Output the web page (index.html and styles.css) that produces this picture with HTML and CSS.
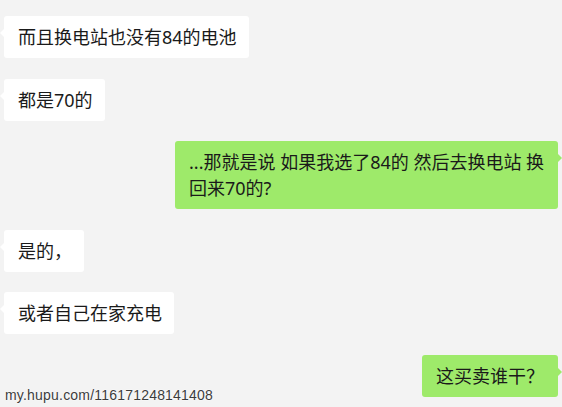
FILE: index.html
```html
<!DOCTYPE html>
<html lang="zh-CN">
<head>
  <meta charset="UTF-8" />
  <meta name="viewport" content="width=device-width, initial-scale=1" />
  <title>聊天记录</title>
  <link rel="stylesheet" href="styles.css">
</head>
<body>

  <div class="chat">
    <div class="msg left"><div class="bubble">而且换电站也没有84的电池</div></div>
    <div class="msg left"><div class="bubble">都是70的</div></div>
    <div class="msg right"><div class="bubble wide">...那就是说 如果我选了84的 然后去换电站 换回来70的?</div></div>
    <div class="msg left"><div class="bubble">是的，</div></div>
    <div class="msg left"><div class="bubble">或者自己在家充电</div></div>
    <div class="msg right"><div class="bubble">这买卖谁干？</div></div>
  </div>

  <div class="watermark">my.hupu.com/116171248141408</div>

</body>
</html>
```

FILE: styles.css
```css
* {
  margin: 0;
  padding: 0;
  box-sizing: border-box;
}
body {
  background-color: #f3f3f3;
  color: #1a1a1a;
  font-family: "Noto Sans", "Noto Sans CJK SC", sans-serif;
  width: 562px;
  height: 407px;
  overflow: hidden;
  position: relative;
}
.chat {
  display: flex;
  flex-direction: column;
  gap: 20.5px;
  padding: 16px 4px 0 4px;
}
.msg {
  display: flex;
}
.msg.right {
  justify-content: flex-end;
}
.bubble {
  position: relative;
  font-size: 18px;
  line-height: 26px;
  padding: 8px 12px 8px 14px;
  border-radius: 3px;
  background-color: #fff;
}
.bubble::before {
  content: "";
  position: absolute;
  top: 12px;
  border: 5px solid transparent;
}
.left .bubble::before {
  left: -9px;
  border-right: 5px solid #fff;
}
.right .bubble {
  background-color: #9eea6a;
  padding-right: 14px;
}
.right .bubble::before {
  right: -9px;
  border-left: 5px solid #9eea6a;
}
.bubble.wide {
  width: 383px;
  padding-right: 10px;
}
.watermark {
  position: absolute;
  left: 5px;
  bottom: 4px;
  font-family: "Liberation Sans", Arial, sans-serif;
  font-size: 14px;
  letter-spacing: 0.2px;
  color: #3c3c3c;
  text-shadow: 0 0 2px #fff, 0 0 1px #fff;
}
```
